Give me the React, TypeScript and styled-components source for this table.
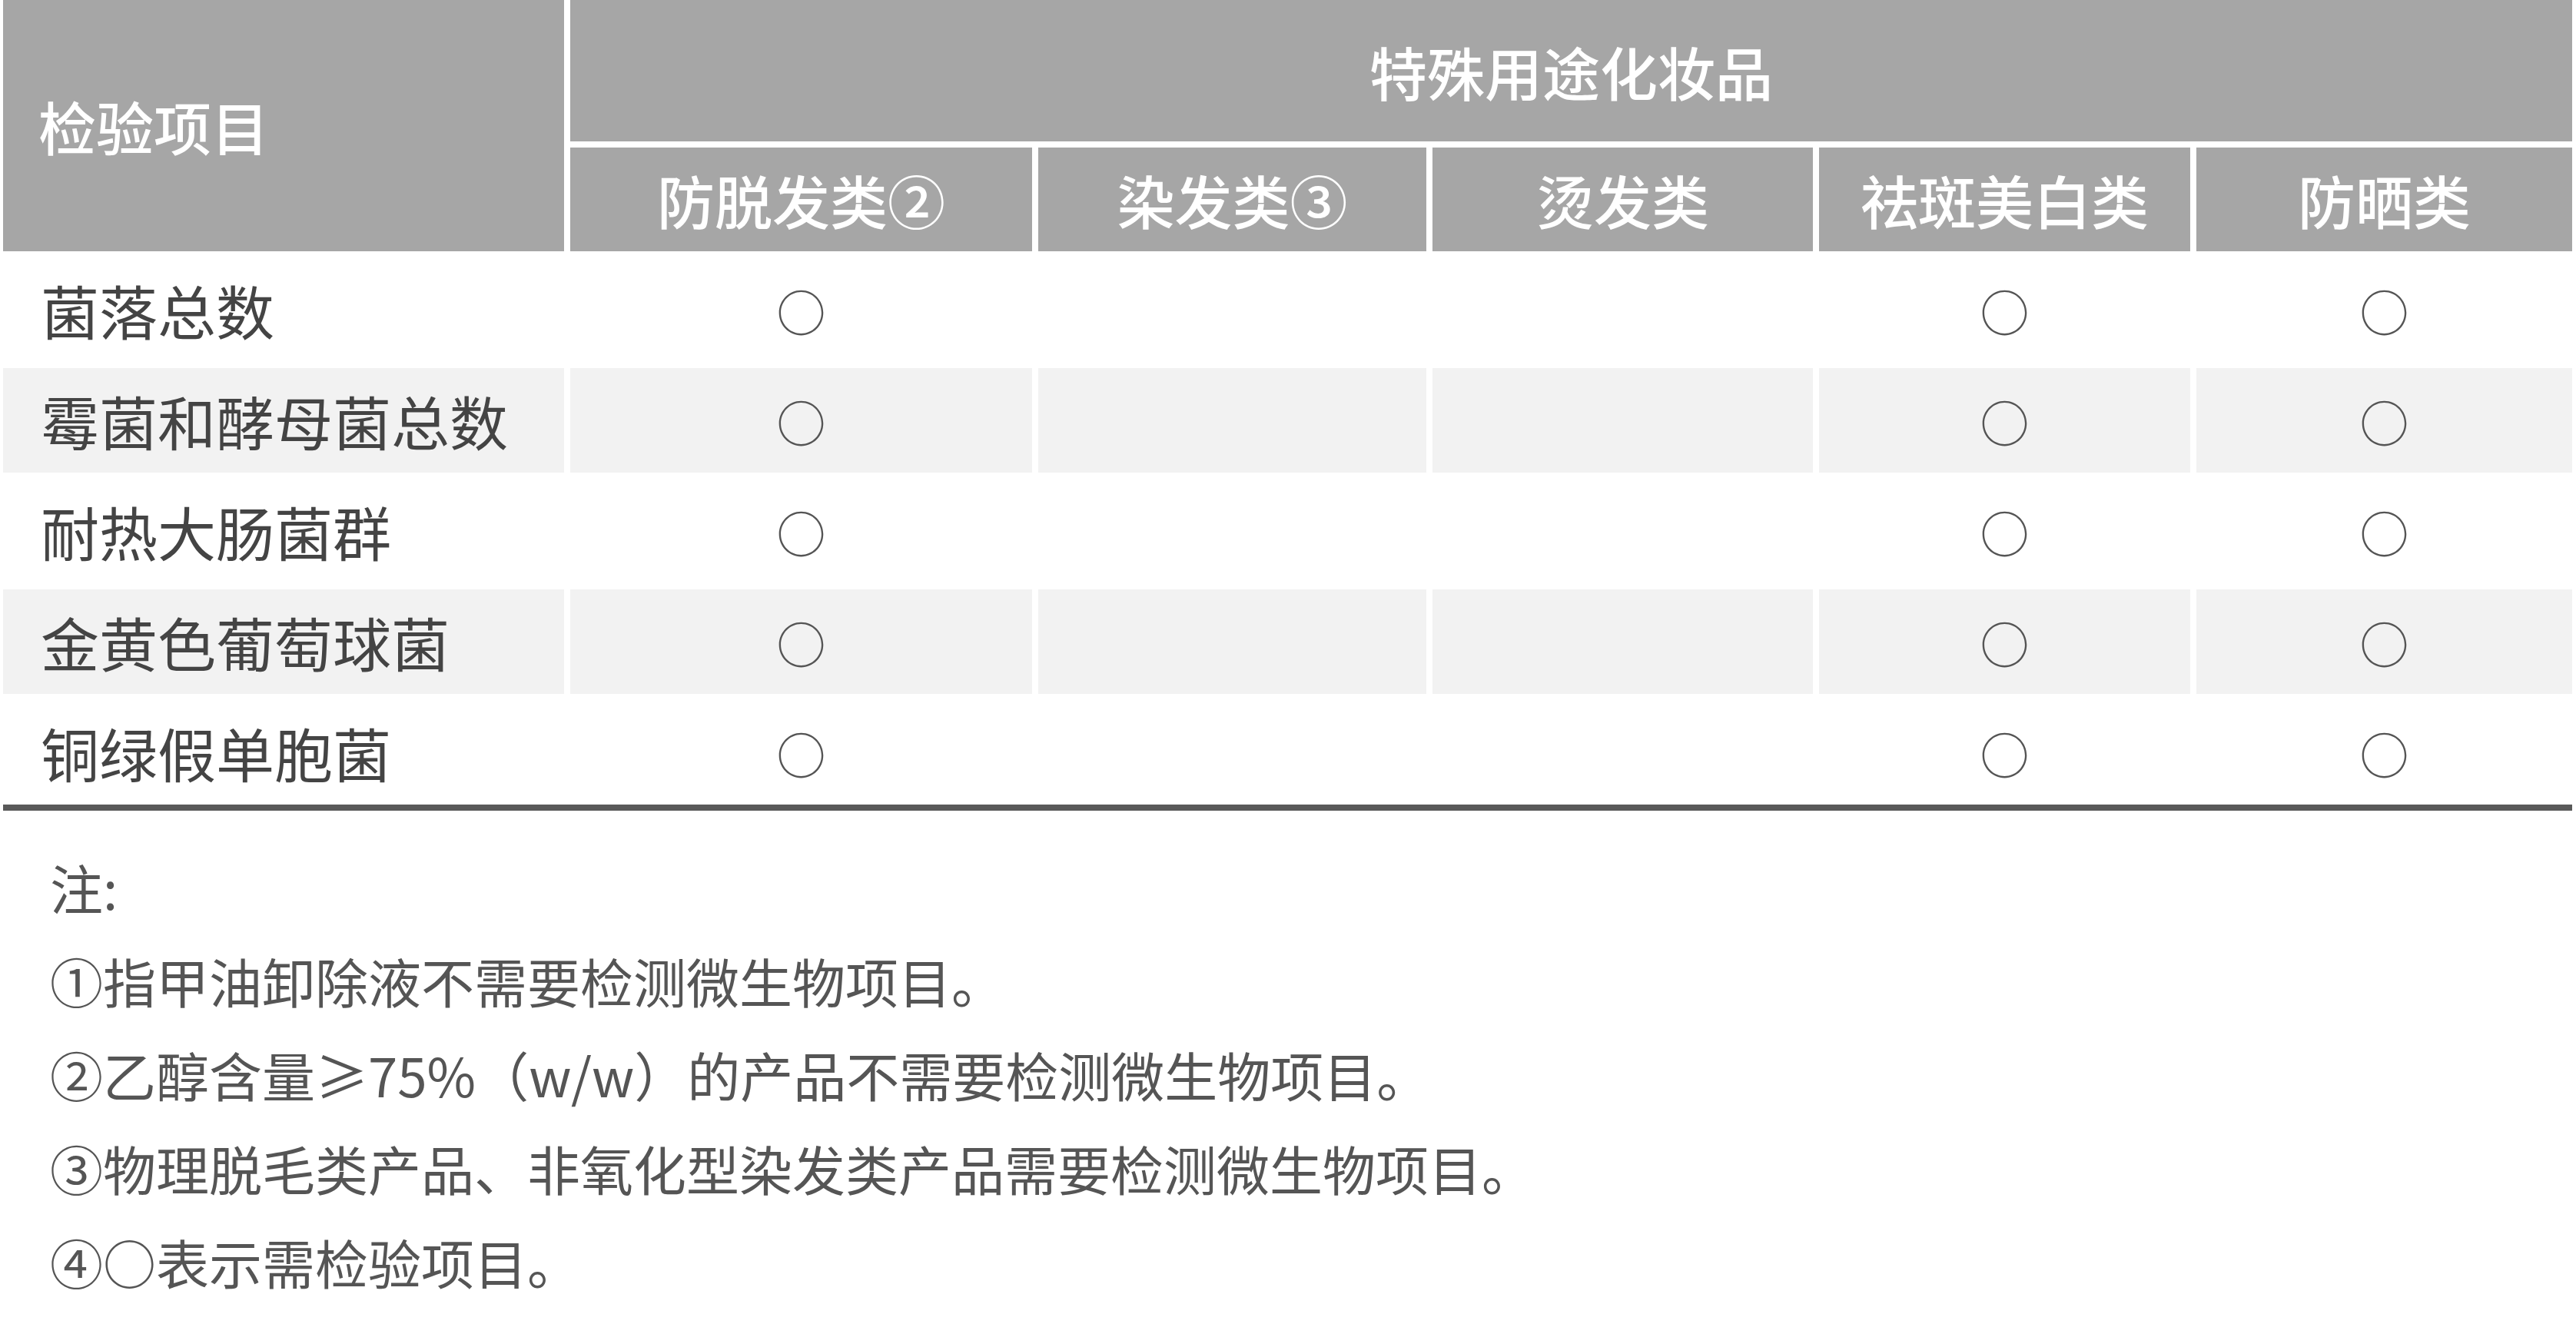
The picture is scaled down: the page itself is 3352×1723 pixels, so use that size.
import styled, { createGlobalStyle } from "styled-components";

const GlobalStyle = createGlobalStyle`
  html, body {
    margin: 0;
    padding: 0;
    background: #ffffff;
  }
  body {
    font-family: "Noto Sans CJK SC", "Noto Sans", sans-serif;
  }
`;

const Page = styled.div`
  padding: 0 5px 0 4px;
`;

const Grid = styled.div`
  display: grid;
  grid-template-columns: 730px 601px 505px 495px 483px 489px;
  grid-template-rows: 184px 135px repeat(5, 136px);
  gap: 8px;
  border-bottom: 8px solid #595959;
`;

const HeadCell = styled.div<{ $rowSpan?: number; $colSpan?: number; $left?: boolean }>`
  background: #a6a6a6;
  color: #ffffff;
  font-size: 75px;
  font-weight: 500;
  display: flex;
  align-items: center;
  justify-content: ${(p) => (p.$left ? "flex-start" : "center")};
  padding-left: ${(p) => (p.$left ? "46px" : "0")};
  grid-row: ${(p) => (p.$rowSpan ? `span ${p.$rowSpan}` : "auto")};
  grid-column: ${(p) => (p.$colSpan ? `span ${p.$colSpan}` : "auto")};
`;

const BodyCell = styled.div<{ $shade: boolean; $left?: boolean }>`
  background: ${(p) => (p.$shade ? "#f2f2f2" : "#ffffff")};
  color: #444444;
  font-size: 76px;
  display: flex;
  align-items: center;
  justify-content: ${(p) => (p.$left ? "flex-start" : "center")};
  padding-left: ${(p) => (p.$left ? "49px" : "0")};
`;

const Mark = styled.span`
  font-size: 64px;
  color: #555555;
  line-height: 1;
`;

const Notes = styled.div`
  padding: 38px 0 0 61px;
  color: #555555;
  font-size: 69px;
  line-height: 122px;
`;

const NoteLine = styled.div`
  white-space: nowrap;
`;

const subHeads = ["防脱发类②", "染发类③", "烫发类", "祛斑美白类", "防晒类"];

const rows = [
  "菌落总数",
  "霉菌和酵母菌总数",
  "耐热大肠菌群",
  "金黄色葡萄球菌",
  "铜绿假单胞菌",
];

// which of the five special-use columns need the test
const needed = [true, false, false, true, true];

const notes = [
  "注:",
  "①指甲油卸除液不需要检测微生物项目。",
  "②乙醇含量≥75%（w/w）的产品不需要检测微生物项目。",
  "③物理脱毛类产品、非氧化型染发类产品需要检测微生物项目。",
  "④○表示需检验项目。",
];

const App: React.FC = () => {
  return (
    <Page>
      <GlobalStyle />
      <Grid>
        <HeadCell $rowSpan={2} $left>
          检验项目
        </HeadCell>
        <HeadCell $colSpan={5}>特殊用途化妆品</HeadCell>
        {subHeads.map((h) => (
          <HeadCell key={h}>{h}</HeadCell>
        ))}
        {rows.map((name, i) => {
          const shade = i % 2 === 1;
          return [
            <BodyCell key={name} $shade={shade} $left>
              {name}
            </BodyCell>,
            ...needed.map((n, j) => (
              <BodyCell key={`${name}-${j}`} $shade={shade}>
                {n && <Mark>○</Mark>}
              </BodyCell>
            )),
          ];
        })}
      </Grid>
      <Notes>
        {notes.map((n) => (
          <NoteLine key={n}>{n}</NoteLine>
        ))}
      </Notes>
    </Page>
  );
};

export default App;
